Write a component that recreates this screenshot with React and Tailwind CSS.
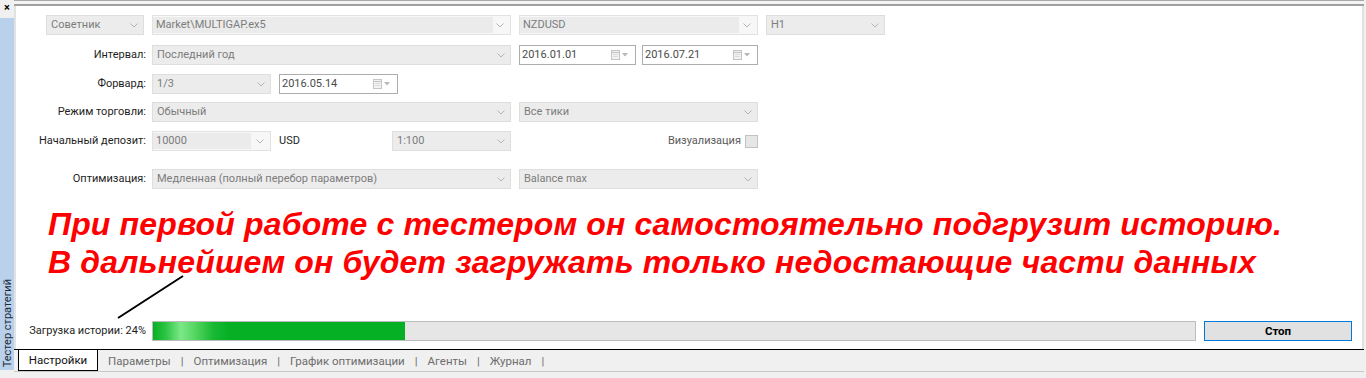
import React from 'react';

const Chevron = () => (
  <svg width="8" height="5" viewBox="0 0 8 5" className="shrink-0">
    <polyline points="0.5,0.5 4,4 7.5,0.5" fill="none" stroke="#b4b4b4" strokeWidth="1" />
  </svg>
);

const CalIcon = () => (
  <div className="flex items-center gap-[2px]">
    <svg width="9" height="10" viewBox="0 0 9 10">
      <rect x="0.5" y="0.5" width="8" height="9" fill="#f2f2f2" stroke="#c4c4c4" />
      <line x1="1" y1="2.5" x2="8" y2="2.5" stroke="#c4c4c4" />
      <line x1="2" y1="4.5" x2="7" y2="4.5" stroke="#dcdcdc" />
      <line x1="2" y1="6.5" x2="7" y2="6.5" stroke="#dcdcdc" />
    </svg>
    <svg width="6" height="4" viewBox="0 0 6 4">
      <polygon points="0,0 6,0 3,3.5" fill="#b8b8b8" />
    </svg>
  </div>
);

// disabled combo, fully shaded
const Combo = ({ className = '', children }) => (
  <div className={`flex h-5 shrink-0 items-center justify-between border border-[#dedede] bg-[#ececec] pl-[4px] pr-[5px] text-[#7c7c7c] ${className}`}>
    <span className="whitespace-nowrap">{children}</span>
    <Chevron />
  </div>
);

// editable combo: shaded text part, lighter button part
const EditCombo = ({ className = '', shade, children }) => (
  <div className={`flex h-5 shrink-0 items-center border border-[#e2e2e2] bg-[#f7f7f7] pr-[6px] text-[#7c7c7c] ${className}`}>
    <div className={`flex h-[16px] items-center bg-[#ebebeb] pl-[3px] ${shade}`}>{children}</div>
    <div className="flex-1" />
    <Chevron />
  </div>
);

const DateBox = ({ className = '', children }) => (
  <div className={`flex h-5 shrink-0 items-center justify-between border border-[#adadad] bg-white pl-[2px] pr-[7px] text-[#4a4a4a] ${className}`}>
    <span>{children}</span>
    <CalIcon />
  </div>
);

const Label = ({ children }) => (
  <div className="w-[136px] shrink-0 whitespace-nowrap pr-[6px] text-right text-[#1e1e1e]">{children}</div>
);

export default function App() {
  const tabs = ['Параметры', 'Оптимизация', 'График оптимизации', 'Агенты', 'Журнал'];
  return (
    <div className="relative flex h-[378px] w-[1366px] overflow-hidden bg-[#f0f0f0] font-['Segoe_UI','Roboto',sans-serif] text-[11px] leading-[14px]">
      {/* left strip */}
      <div className="flex w-[14px] shrink-0 flex-col">
        <div className="flex h-[18px] justify-center pt-[1px] text-[11px] font-bold text-black">×</div>
        <div className="flex flex-1 items-end justify-center bg-[#b9d1ea] pb-[3px]">
          <span className="rotate-180 text-[11px] leading-[13px] text-[#1e2a3a] [writing-mode:vertical-rl]">Тестер стратегий</span>
        </div>
        <div className="h-[8px]" />
      </div>

      {/* main */}
      <div className="flex flex-1 flex-col">
        <div className="h-[1px] bg-[#a8a8a8]" />
        <div className="h-[3px] bg-[#f4f4f4]" />
        <div className="h-[2px] bg-[#a0a0a0]" />

        <div className="flex flex-1 flex-col border-r-[2px] border-l-[2px] border-[#e2e2e2] bg-white pt-[9px] pb-[8px]">
          {/* row 1 */}
          <div className="flex items-center gap-[8px] pl-[30px]">
            <Combo className="w-[98px]">Советник</Combo>
            <EditCombo className="w-[359px]" shade="w-[340px]">Market\MULTIGAP.ex5</EditCombo>
            <EditCombo className="w-[239px]" shade="w-[219px]">NZDUSD</EditCombo>
            <Combo className="w-[119px]">H1</Combo>
          </div>

          {/* row 2 */}
          <div className="mt-[10px] flex items-center">
            <Label>Интервал:</Label>
            <Combo className="w-[359px]">Последний год</Combo>
            <DateBox className="ml-[8px] w-[117px]">2016.01.01</DateBox>
            <DateBox className="ml-[6px] w-[116px]">2016.07.21</DateBox>
          </div>

          {/* row 3 */}
          <div className="mt-[9px] flex items-center">
            <Label>Форвард:</Label>
            <Combo className="w-[119px]">1/3</Combo>
            <DateBox className="ml-[8px] w-[119px]">2016.05.14</DateBox>
          </div>

          {/* row 4 */}
          <div className="mt-[8px] flex items-center">
            <Label>Режим торговли:</Label>
            <Combo className="w-[359px]">Обычный</Combo>
            <Combo className="ml-[8px] w-[239px]">Все тики</Combo>
          </div>

          {/* row 5 */}
          <div className="mt-[9px] flex items-center">
            <Label>Начальный депозит:</Label>
            <EditCombo className="w-[119px]" shade="w-[98px]">10000</EditCombo>
            <div className="ml-[8px] w-[105px] text-[#1e1e1e]">USD</div>
            <Combo className="ml-[8px] w-[119px]">1:100</Combo>
            <div className="flex w-[247px] items-center justify-end gap-[4px] text-[#5a5a5a]">
              <span>Визуализация</span>
              <div className="h-[13px] w-[13px] border border-[#c2c2c2] bg-[#e6e6e6]" />
            </div>
          </div>

          {/* row 6 */}
          <div className="mt-[18px] flex items-center">
            <Label>Оптимизация:</Label>
            <Combo className="w-[359px]">Медленная (полный перебор параметров)</Combo>
            <Combo className="ml-[8px] w-[239px]">Balance max</Combo>
          </div>

          {/* annotation */}
          <div className="mt-[16px] whitespace-nowrap pl-[32px] font-['Liberation_Sans',sans-serif] text-[32px] leading-[38px] font-bold italic tracking-[0.15px] text-[#ff0000]">
            <div>При первой работе с тестером он самостоятельно подгрузит историю.</div>
            <div>В дальнейшем он будет загружать только недостающие части данных</div>
          </div>

          {/* progress row */}
          <div className="mt-auto flex items-center">
            <div className="w-[136px] shrink-0 whitespace-nowrap pr-[6px] text-right text-[#1e1e1e]">Загрузка истории: 24%</div>
            <div className="h-5 w-[1044px] shrink-0 border border-[#bcbcbc] bg-[#e6e6e6]">
              <div className="h-full w-[252px] bg-[linear-gradient(90deg,#06b025_0%,#2cc443_5%,#7ce888_11%,#5ad866_16%,#18b933_24%,#06b025_30%,#06b025_100%)]" />
            </div>
            <button className="ml-[8px] h-5 w-[148px] shrink-0 border border-[#0078d7] bg-[#e1e1e1] text-[11.5px] font-bold text-black">
              Стоп
            </button>
          </div>
        </div>

        {/* tab strip */}
        <div className="flex h-[22px] shrink-0 items-start border-t border-black pl-[4px]">
          <div className="flex h-[21px] w-[80px] items-center justify-center border-r border-b border-l border-black bg-white text-[11.5px] text-[#111]">
            Настройки
          </div>
          {tabs.map((t) => (
            <div key={t} className="flex h-[21px] items-center text-[11.5px] text-[#6d6d6d]">
              <span className="px-[10px]">{t}</span>
              <span>|</span>
            </div>
          ))}
        </div>
        <div className="h-[1px] shrink-0 bg-[#c8c8c8]" />
        <div className="h-[6px] shrink-0" />
      </div>
      <div className="w-[2px] shrink-0" />

      {/* pointer line */}
      <svg className="pointer-events-none absolute top-0 left-0" width="1366" height="378">
        <line x1="118" y1="318" x2="183" y2="276" stroke="#000" strokeWidth="2" />
      </svg>
    </div>
  );
}
